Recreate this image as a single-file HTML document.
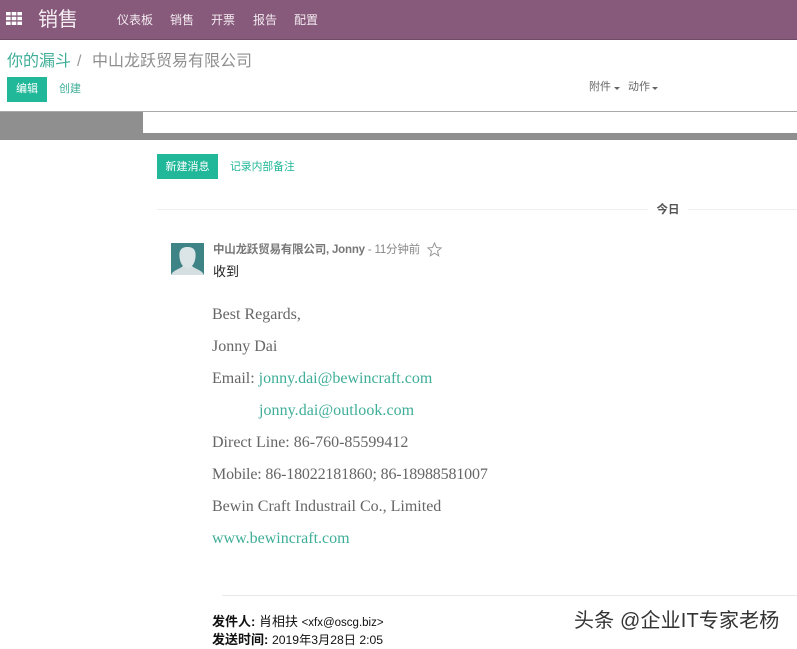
<!DOCTYPE html>
<html>
<head>
<meta charset="utf-8">
<style>
html,body{margin:0;padding:0;background:#fff}
body{width:797px;height:648px;position:relative;overflow:hidden;font-family:"Liberation Sans","Noto Sans CJK SC",sans-serif}
.a{position:absolute;white-space:nowrap}
.nav{color:#f3eaf0;font-size:12px;top:13px;line-height:14px}
.serif{font-family:"Liberation Serif","Noto Serif CJK SC",serif;font-size:16px;color:#666;left:212px;line-height:20px}
.g{color:#21b799}
</style>
</head>
<body>
<div class="a" style="left:0;top:0;width:797px;height:40px;background:#875a7b;border-bottom:1px solid #6f4c66;box-sizing:border-box"></div>
<svg class="a" style="left:6px;top:12px" width="16" height="13" viewBox="0 0 16 13">
<g fill="#fff"><rect x="0" y="0" width="4.6" height="3.4"/><rect x="5.7" y="0" width="4.6" height="3.4"/><rect x="11.4" y="0" width="4.6" height="3.4"/><rect x="0" y="4.8" width="4.6" height="3.4"/><rect x="5.7" y="4.8" width="4.6" height="3.4"/><rect x="11.4" y="4.8" width="4.6" height="3.4"/><rect x="0" y="9.6" width="4.6" height="3.4"/><rect x="5.7" y="9.6" width="4.6" height="3.4"/><rect x="11.4" y="9.6" width="4.6" height="3.4"/></g>
</svg>
<div class="a" style="left:38px;top:7px;font-size:20px;line-height:26px;color:#f5eef3">销售</div>
<div class="a nav" style="left:117px">仪表板</div>
<div class="a nav" style="left:170px">销售</div>
<div class="a nav" style="left:211px">开票</div>
<div class="a nav" style="left:253px">报告</div>
<div class="a nav" style="left:294px">配置</div>

<div class="a g" style="left:7px;top:51px;font-size:16px;line-height:21px;color:#3fae98">你的漏斗</div>
<div class="a" style="left:77px;top:51px;font-size:16px;line-height:21px;color:#999">/</div>
<div class="a" style="left:92px;top:51px;font-size:16px;line-height:21px;color:#8f8f8f">中山龙跃贸易有限公司</div>

<div class="a" style="left:7px;top:77px;width:40px;height:25px;background:#21b799;color:#fff;font-size:11px;line-height:25px;text-align:center">编辑</div>
<div class="a" style="left:59px;top:82px;font-size:11px;line-height:14px;color:#3fae98">创建</div>

<div class="a" style="left:589px;top:80px;font-size:11px;line-height:14px;color:#666">附件</div>
<div class="a" style="left:614px;top:87px;width:0;height:0;border-left:3px solid transparent;border-right:3px solid transparent;border-top:3px solid #666"></div>
<div class="a" style="left:628px;top:80px;font-size:11px;line-height:14px;color:#666">动作</div>
<div class="a" style="left:652px;top:87px;width:0;height:0;border-left:3px solid transparent;border-right:3px solid transparent;border-top:3px solid #666"></div>

<div class="a" style="left:0;top:111px;width:797px;height:1px;background:#a8a8a8"></div>
<div class="a" style="left:0;top:112px;width:143px;height:28px;background:#8f8f8f"></div>
<div class="a" style="left:143px;top:133px;width:654px;height:7px;background:#8f8f8f"></div>

<div class="a" style="left:157px;top:154px;width:61px;height:25px;background:#21b799;color:#fff;font-size:11px;line-height:27px;text-align:center">新建消息</div>
<div class="a g" style="left:230px;top:160px;font-size:10.8px;line-height:14px">记录内部备注</div>

<div class="a" style="left:157px;top:209px;width:640px;height:1px;background:#eee"></div>
<div class="a" style="left:648px;top:201px;width:40px;height:18px;background:#fff;color:#555;font-size:11.5px;font-weight:bold;line-height:18px;text-align:center">今日</div>

<svg class="a" style="left:171px;top:243px" width="33" height="32" viewBox="0 0 33 32">
<rect width="33" height="32" fill="#3e8385"/>
<path d="M0 32 C2 27 9 26 12 23 L21 23 C24 26 31 27 33 32 Z" fill="#d5dfe2"/>
<path d="M16.5 4 C9 4 8 9 8.5 14 C9 20 12 25 16.5 25 C21 25 24 20 24.5 14 C25 9 24 4 16.5 4 Z" fill="#dbe4e7"/>
</svg>
<div class="a" style="left:213px;top:242px;font-size:11.5px;line-height:16px;font-weight:bold;color:#777;letter-spacing:-.2px">中山龙跃贸易有限公司, Jonny <span style="font-weight:normal;font-size:11.5px;color:#888;letter-spacing:-.2px">- 11分钟前</span></div>
<svg class="a" style="left:427px;top:242px" width="15" height="15" viewBox="0 0 15 15"><path d="M7.5 1 L9.4 5.5 L14.2 5.9 L10.5 9 L11.7 13.8 L7.5 11.2 L3.3 13.8 L4.5 9 L.8 5.9 L5.6 5.5 Z" fill="none" stroke="#999" stroke-width="1"/></svg>
<div class="a" style="left:213px;top:263px;font-size:13px;line-height:18px;color:#222">收到</div>

<div class="a serif" style="top:305px">Best Regards,</div>
<div class="a serif" style="top:337px">Jonny Dai</div>
<div class="a serif" style="top:369px">Email: <span style="color:#3fae98">jonny.dai@bewincraft.com</span></div>
<div class="a serif" style="top:401px;left:259px;color:#3fae98;letter-spacing:.05px">jonny.dai@outlook.com</div>
<div class="a serif" style="top:433px">Direct Line: 86-760-85599412</div>
<div class="a serif" style="top:465px;letter-spacing:-.16px">Mobile: 86-18022181860; 86-18988581007</div>
<div class="a serif" style="top:497px">Bewin Craft Industrail Co., Limited</div>
<div class="a serif" style="top:529px;color:#3fae98">www.bewincraft.com</div>

<div class="a" style="left:222px;top:595px;width:575px;height:1px;background:#e8e8e8"></div>
<div class="a" style="left:212px;top:613px;font-size:13px;line-height:17px;color:#111"><b>发件人:</b> 肖相扶 <span style="font-size:11.5px">&lt;xfx@oscg.biz&gt;</span></div>
<div class="a" style="left:212px;top:631px;font-size:13px;line-height:17px;color:#111"><b>发送时间:</b> <span style="font-size:12.2px">2019年3月28日 2:05</span></div>

<div class="a" style="left:574px;top:609px;font-size:20px;line-height:24px;color:#333;letter-spacing:.15px">头条 @企业IT专家老杨</div>
</body>
</html>
